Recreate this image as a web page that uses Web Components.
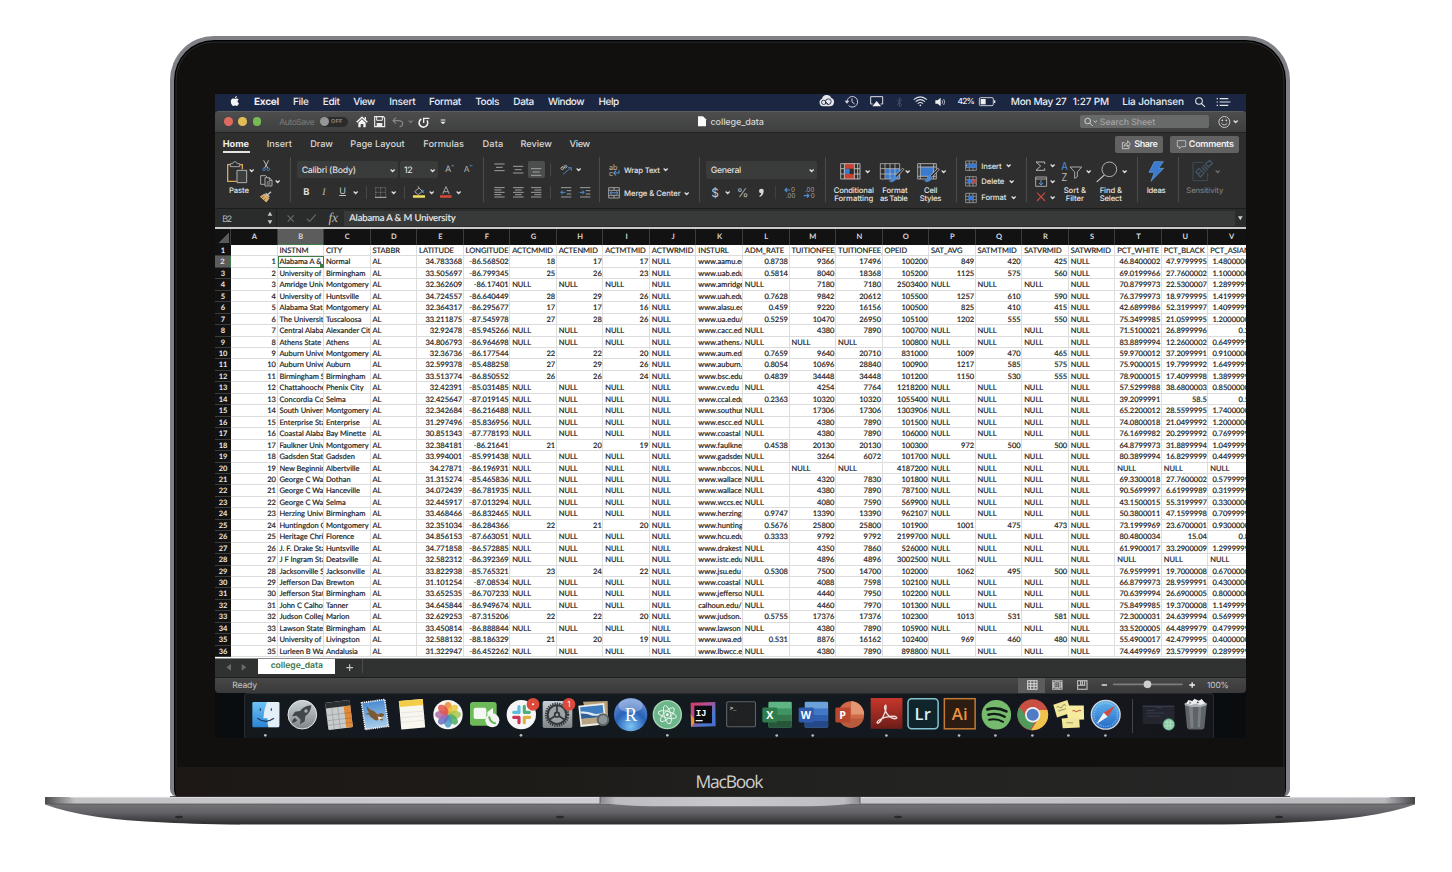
<!DOCTYPE html>
<html lang="en">
<head>
<meta charset="utf-8">
<title>college_data</title>
<style>
html,body{margin:0;padding:0;background:#fff;overflow:hidden}
body{width:1452px;height:872px}
</style>
</head>
<body>
<mac-book>
  <menu-bar></menu-bar>
  <excel-window></excel-window>
  <app-dock></app-dock>
</mac-book>
<script>
/* Drawing regions: origin in page pixels and the number of drawing units per pixel. */
const A={x:210,y:88,s:3}, B={x:550,y:88,s:3}, D={x:900,y:88,s:3}, P={x:210,y:655,s:3}, Q={x:725,y:655,s:2.987};
const r2=n=>Math.round(n*100)/100;
const item=(o,x0,y0,x1,y1,html,css='')=>({x:o.x+x0/o.s,y:o.y+y0/o.s,w:(x1-x0)/o.s,h:(y1-y0)/o.s,html,css});
/* Icon drawn in region units */
const ic=(o,x0,y0,x1,y1,g,css)=>item(o,x0,y0,x1,y1,`<svg viewBox="${x0} ${y0} ${x1-x0} ${y1-y0}" width="100%" height="100%" fill="none" stroke="#b4b4b4" stroke-width="2.6">${g}</svg>`,css);
/* Text label fitted to its width */
const tx=(o,x0,x1,yc,t,size=9,css='')=>item(o,x0,yc-16.5,x1,yc+19.5,`<fit-text w="${r2((x1-x0)/o.s)}" style="font-size:${size}px;${css}">${t}</fit-text>`);
const ch=(o,xc,yc,c='#dcdcdc')=>ic(o,xc-8,yc-8,xc+8,yc+8,`<path stroke="${c}" stroke-width="3.8" d="M${xc-6} ${yc-3.5}l6 6 6-6"/>`);
const vl=(o,x,y0,y1,c='#464746')=>item(o,x-1.5,y0,x+1.5,y1,'',`background:${c}`);
/* Flex row: every item is spaced from the previous one */
const row=(x0,y0,h,items)=>{let c=x0;return `<div class="row" style="height:${r2(h)}px">`+items.map(i=>{const m=i.x-c;c=i.x+i.w;return `<div class="it" style="margin:${r2(i.y-y0)}px 0 0 ${r2(m)}px;width:${r2(i.w)}px;height:${r2(i.h)}px;${i.css||''}">${i.html}</div>`}).join('')+'</div>'};
const box=(o,x0,y0,x1,y1,css,items)=>item(o,x0,y0,x1,y1,row(o.x+x0/o.s,o.y+y0/o.s,(y1-y0)/o.s,items),css);
const BASE=`<style>:host{display:block;box-sizing:border-box;font-family:Inter,"Liberation Sans",sans-serif;color:#dedede}
.row{display:flex;align-items:flex-start;flex:none}.it{flex:none;box-sizing:border-box}svg{display:block;overflow:visible}svg text{stroke:none}</style>`;

class FitText extends HTMLElement{
  connectedCallback(){
    const s=this.shadowRoot||this.attachShadow({mode:'open'});
    s.innerHTML='<style>:host{display:block;line-height:12px;height:12px;white-space:pre;text-rendering:geometricPrecision}span{display:inline-block}</style><span><slot></slot></span>';
    const sp=s.querySelector('span'),w=+this.getAttribute('w'),n=this.textContent.length;
    const nat=sp.getBoundingClientRect().width;
    if(nat&&n>1)sp.style.letterSpacing=((w-nat)/(n-1)).toFixed(3)+'px';
  }
}
customElements.define('fit-text',FitText);

class MenuBar extends HTMLElement{
  connectedCallback(){
    const s=this.attachShadow({mode:'open'});
    const m=(o,a,b,t,c='')=>tx(o,a,b,41,t,10,'font-weight:500;color:#eceef2;'+c);
    s.innerHTML=BASE+`<style>:host{height:17px;background:#1b2642}</style>`+row(215,94,17,[
      item(A,60,25,88,55,'<svg viewBox="1 0 21 24" width="100%" height="100%" fill="#f3f3f3"><path d="M12.152 6.896c-.948 0-2.415-1.078-3.96-1.04-2.04.027-3.91 1.183-4.961 3.014-2.117 3.675-.546 9.103 1.519 12.09 1.013 1.454 2.208 3.09 3.792 3.039 1.52-.065 2.09-.987 3.935-.987 1.831 0 2.35.987 3.96.948 1.637-.026 2.676-1.48 3.676-2.948 1.156-1.688 1.636-3.325 1.662-3.415-.039-.013-3.182-1.221-3.22-4.857-.026-3.04 2.48-4.494 2.597-4.559-1.429-2.09-3.623-2.324-4.39-2.376-2-.156-3.675 1.09-4.61 1.09zM15.53 3.83c.843-1.012 1.4-2.427 1.245-3.83-1.207.052-2.662.805-3.532 1.818-.78.896-1.454 2.338-1.273 3.714 1.338.104 2.715-.688 3.559-1.701"/></svg>'),
      m(A,132,208,'Excel','font-weight:700'),m(A,249,297,'File'),m(A,338,390,'Edit'),m(A,430,496,'View'),m(A,538,617,'Insert'),m(A,657,754,'Format'),m(A,796,868,'Tools'),m(A,910,973,'Data'),m(A,1014,1124,'Window'),m(B,146,208,'Help'),
      ic(B,806,25,850,58,'<path fill="#e8e8ec" stroke="none" d="M818 56a12 12 0 0 1-3-23 15 15 0 0 1 28-2 13 13 0 0 1-6 25z"/><g stroke="#1b2642" stroke-width="2.6"><circle cx="820" cy="44" r="6.5"/><circle cx="834" cy="42" r="8.5"/><path d="M824 41l10 9"/></g>'),
      ic(B,884,24,924,60,'<g stroke="#d5d8e0" stroke-width="2.8"><path d="M890 41a16 16 0 1 1 5 12M905 31v11l8 6"/><path fill="#d5d8e0" stroke="none" d="M883 38h14l-7 9z"/></g>'),
      ic(B,961,25,1001,58,'<path stroke="#dcdfe6" stroke-width="3" d="M969 49h-6V27h36v22h-6"/><path fill="#f0f0f4" stroke="none" d="M981 40l13 16h-26z"/>'),
      ic(B,1040,26,1056,58,'<path stroke="#4c566e" stroke-width="2.4" d="M1040 34l14 15-7 7V28l7 7-14 15"/>'),
      ic(D,40,25,84,57,'<g stroke="#dfe2e8" stroke-width="3.2"><path d="M42 36q20-17 40 0M48 42q14-12 28 0M54 48q8-7 16 0"/><circle cx="62" cy="53" r="2.6" fill="#dfe2e8" stroke="none"/></g>'),
      ic(D,104,26,134,56,'<path fill="#eee" stroke="none" d="M105 36h7l9-8v26l-9-8h-7z"/><path stroke="#cfd3db" stroke-width="2.4" d="M125 36q4 5 0 10M130 32q6 9 0 18"/>'),
      tx(D,173,225,41,'42%',8.4,'font-weight:500;color:#eceef2'),
      ic(D,237,27,287,55,'<rect x="238" y="29" width="42" height="24" rx="4" stroke="#e4e4e8"/><rect x="242" y="33" width="15" height="16" fill="#eee" stroke="none"/><path d="M284 37v8" stroke="#e4e4e8" stroke-width="4"/>'),
      m(D,333,501,'Mon May 27'),m(D,519,628,'1:27 PM'),m(D,667,853,'Lia Johansen'),
      ic(D,886,26,918,58,'<g stroke="#e4e4e8" stroke-width="3.2"><circle cx="898" cy="38" r="10"/><path d="M905 45l11 11"/></g>'),
      ic(D,948,26,992,56,'<path stroke="#e4e4e8" stroke-width="3.4" d="M950 31h4M950 41h4M950 51h4M959 31h26M959 41h32M959 51h26"/>')
    ]);
  }
}
customElements.define('menu-bar',MenuBar);

class TitleBar extends HTMLElement{
  connectedCallback(){
    const dot=(x,c)=>item(A,x-13,88,x+13,114,'',`background:${c};border-radius:50%`);
    this.attachShadow({mode:'open'}).innerHTML=BASE+`<style>:host{height:22px;background:linear-gradient(#4d4d4d,#3e3f3f);border-top:1px solid #5d5d5d;border-bottom:1px solid #222;border-radius:4px 4px 0 0}</style>`+row(215,112,20,[
      dot(55,'#df6a5e'),dot(98,'#e1bc57'),dot(141,'#79b955'),
      tx(A,208,314,102,'AutoSave',8.6,'color:#747474;font-weight:500'),
      box(A,330,87,413,116,'background:#2b2b2c;border-radius:5px',[item(A,330,88,357,115,'','background:#969696;border-radius:50%'),tx(A,363,397,101,'OFF',5.4,'color:#8f8f8f;font-weight:600')]),
      ic(A,437,85,472,119,'<path d="M439 104l16-15 16 15" stroke="#f4f4f4" stroke-width="4.4"/><path d="M444 105l11-10 11 10v14h-7v-10h-8v10h-7z" fill="#f4f4f4" stroke="none"/><path d="M465 88v8" stroke="#f4f4f4" stroke-width="4"/>'),
      ic(A,492,85,526,119,'<path d="M494 87h26l4 4v26h-30z" stroke="#ededed" stroke-width="3.4"/><path d="M500 87v11h17V87" stroke="#ededed" stroke-width="3"/><path d="M500 117v-11h17v11z" fill="#ededed" stroke="none"/>'),
      ic(A,547,86,582,118,'<path d="M559 88l-9 9 9 9M551 97h18q10 1 10 10 0 7-9 8" stroke="#888" stroke-width="3.4"/>'),
      ch(A,601,102,'#777'),
      ic(A,625,86,661,120,'<path d="M635 92a13 13 0 1 0 17 4" stroke="#f2f2f2" stroke-width="4.6"/><path d="M642 104V90h17" stroke="#f2f2f2" stroke-width="4"/>'),
      ic(A,689,94,707,112,'<path d="M691 97h14" stroke="#eee" stroke-width="3"/><path d="M690 102h16l-8 8z" fill="#eee" stroke="none"/>'),
      ic(B,444,85,469,117,'<path d="M444 86h15l9 9v21h-24z" fill="#fafafa" stroke="none"/>'),
      tx(B,482,642,103,'college_data',9,'color:#d6d6d6;font-weight:500'),
      box(D,540,82,926,121,'background:#686969;border-radius:2px',[
        ic(D,552,87,592,116,'<g stroke="#d0d0d0" stroke-width="3"><circle cx="563" cy="99" r="8.5"/><path d="M569 105l9 9M581 98l5 5 5-5"/></g>'),
        tx(D,600,766,103,'Search Sheet',8.8,'color:#a5a5a5;font-weight:500')]),
      ic(D,953,83,991,120,'<g stroke="#cfcfcf" stroke-width="2.8"><circle cx="972" cy="101" r="16.5"/><path d="M963 105q9 10 18 0"/></g><circle cx="966" cy="96" r="2.6" fill="#ddd" stroke="none"/><circle cx="978" cy="96" r="2.6" fill="#ddd" stroke="none"/>'),
      ch(D,1008,102)
    ]);
  }
}
customElements.define('title-bar',TitleBar);

class RibbonTabs extends HTMLElement{
  connectedCallback(){
    const t=(o,a,b,s)=>tx(o,a,b,170,s,9.2,'font-weight:500;color:#d8d8d8');
    this.attachShadow({mode:'open'}).innerHTML=BASE+`<style>:host{height:24px;background:#2d2e2d}</style>`+row(215,133,24,[
      box(A,38,150,119,195,'border-bottom:2px solid #e4e4e4',[tx(A,38,117,170,'Home',9.2,'font-weight:700;color:#f0f0f0')]),
      t(A,170,246,'Insert'),t(A,301,369,'Draw'),t(A,421,584,'Page Layout'),t(A,640,762,'Formulas'),t(A,818,880,'Data'),t(A,932,1026,'Review'),t(B,59,121,'View'),
      box(D,646,144,789,195,'background:#626262;border-radius:2px',[
        ic(D,665,156,691,184,'<g stroke="#cfcfcf" stroke-width="2.6"><path d="M673 164h-7v18h20v-9"/><path d="M671 175q2-9 11-10v-7l8 10-8 9v-6q-7 0-11 4z"/></g>'),
        tx(D,703,774,170,'Share',9,'font-weight:600;color:#f0f0f0')]),
      box(D,810,144,1017,195,'background:#626262;border-radius:2px',[
        ic(D,830,156,858,184,'<path stroke="#c4c4c4" d="M831 158h25v18h-13l-6 6v-6h-6z"/>'),
        tx(D,867,1002,170,'Comments',9,'font-weight:600;color:#f0f0f0')])
    ]);
  }
}
customElements.define('ribbon-tabs',RibbonTabs);

const hl=(l,c='#b0b0b0',w=2.6)=>`<path stroke="${c}" stroke-width="${w}" d="${l.map(([a,y,b])=>`M${a} ${y}H${b}`).join('')}"/>`;
class RibbonTools extends HTMLElement{
  connectedCallback(){
    const col=(x0,x1,rows,line)=>`<div class="col${line?' line':''}" style="width:${r2(x1-x0)}px">`+rows.map(([y0,y1,it])=>row(x0,y0,y1-y0,it)).join('')+'</div>';
    const two=(a,b)=>[[157,183,a],[183,202,b]];
    const lb=(o,a,b,y,s,c='#e6e6e6')=>tx(o,a,b,y,s,7.7,'font-weight:500;color:'+c);
    const big=(icon,labels)=>[[157,186.5,icon],...labels.map((l,k)=>[186.5+8*k,194.5+8*k,[l]])];
    const blue='#3a7bd0';
    const tbl=(o,x,y)=>`<path stroke="#b9b9b9" stroke-width="2.4" d="M${x} ${y}h58v46h-58zM${x} ${y+15}h58M${x} ${y+31}h58M${x+14} ${y}v46M${x+29} ${y}v46M${x+44} ${y}v46"/>`;
    const brush=(x,y)=>`<path d="M${x} ${y}l-24 24-4 8 9-3 24-26z" fill="#2d2e2d" stroke="#b8b8b8" stroke-width="2.4"/><path d="M${x-22} ${y+21}q-11 2-12 14-5 3-9 1 8 9 18 3 7-4 8-12z" fill="#4b8ad6" stroke="none"/>`;
    const cells=(y,g)=>`<path stroke="#a9a9a9" stroke-width="2.2" d="M197 ${y-14}h32v28h-32zM197 ${y-5}h32M197 ${y+5}h32M208 ${y-14}v28M219 ${y-14}v28"/>${g}`;
    this.attachShadow({mode:'open'}).innerHTML=BASE+`<style>:host{height:51px;background:#2d2e2d;display:flex}.col{flex:none;height:45px}.line{background:linear-gradient(#4a4b4a,#4a4b4a) left/1px 100% no-repeat}</style>`+
    col(215,255,[[157,185,[
      ic(A,50,218,112,286,'<path d="M59 229H52v50h27M88 229h8v14" stroke="#e0a35a" stroke-width="4"/><path d="M60 235v-9h7q1-6 7-6t7 6h7v9z" stroke="#b5b5b5" fill="#2d2e2d"/><path d="M80 246h29v37H80z" stroke="#c4c4c4" fill="#3c3d3d"/>'),ch(A,126,249)]],
      [185,202,[lb(A,57,117,307,'Paste')]]])+
    col(255,289.5,[[157,173,[ic(A,155,217,181,251,'<path d="M160 218l12 23M175 218l-12 23" stroke="#c6c6c6" stroke-width="2.8"/><g stroke="#4c8cd6"><circle cx="161" cy="245" r="4"/><circle cx="174" cy="245" r="4"/></g>')]],
      [173,189,[ic(A,149,262,187,297,'<path stroke="#bdbdbd" d="M163 290h-12v-26h15l5 5M164 270h13l8 8v17h-21zM177 270v8h8M169 283h11M169 289h11"/>'),ch(A,203,281)]],
      [189,202,[ic(A,151,308,189,342,'<path d="M184 310l-14 13M168 315l11 11" stroke="#c9c9c9" stroke-width="4"/><path d="M152 325l13-8 13 13-8 11z" fill="#e0ab62" stroke="#e8c58c" stroke-width="2"/><path d="M157 328l5-3M164 334l4-4" stroke="#6b4d22"/>')]]])+
    col(289.5,483,two([
      box(A,261,220,563,271,'background:#3a3b3b;border-radius:2px',[tx(A,275,438,247,'Calibri (Body)',8.8,'font-weight:500'),ch(A,547,247)]),
      box(A,569,220,684,271,'background:#3a3b3b;border-radius:2px',[tx(A,582,608,247,'12',8.8,'font-weight:500'),ch(A,669,247)]),
      tx(A,705,721,245,'A',9,'color:#b4b4b4'),ic(A,722,229,734,241,'<path stroke="#4f8fd8" stroke-width="3" d="M723 236l4-4 4 4"/>'),
      tx(A,761,776,245,'A',8.4,'color:#b4b4b4'),ic(A,777,229,789,241,'<path stroke="#4f8fd8" stroke-width="3" d="M779 232l4 4 4-4"/>')
    ],[
      tx(A,280,296,313,'B',9.4,'font-weight:700'),tx(A,337,350,313,'I',10,'font-style:italic;font-family:Liberation Serif,serif;color:#bbb'),
      tx(A,388,407,311,'<u>U</u>',9,'color:#c8c8c8'),ch(A,437,315),vl(A,469,295,332),
      ic(A,496,297,530,330,'<path stroke="#8a8a8a" stroke-dasharray="3 3" d="M498 299h30M498 313h30M498 299v28M513 299v28M528 299v28"/><path d="M496 328h34" stroke="#b8b8b8" stroke-width="3"/>'),ch(A,551,315),vl(A,583,295,332),
      ic(A,609,295,646,331,'<path d="M614 312l13-11 10 10-12 10zM627 301l-3-5" stroke="#bdbdbd"/><path d="M638 305q6 7 3 12-5 0-5-6z" fill="#4f8fd8" stroke="none"/><path d="M609 323h36v7h-36z" fill="#efe35c" stroke="none"/>'),ch(A,665,315),
      ic(A,691,295,727,331,'<path d="M699 319l10-22 10 22M702 312h14" stroke="#b5b5b5"/><path d="M691 323h35v7h-35z" fill="#d8493a" stroke="none"/>'),ch(A,747,315)
    ]),1)+
    col(483,599,two([
      ic(A,851,226,884,252,hl([[852,229,883],[857,239,877],[852,249,883]])),ic(A,908,230,941,258,hl([[908,234,939],[913,244,934],[908,254,939]])),
      box(A,954,220,1004,271,'background:#4c4d4d;border-radius:2px',[ic(A,964,238,995,266,hl([[964,243,995],[969,253,990],[964,263,995]]))]),vl(A,1023,226,264),
      ic(B,29,227,67,262,'<path d="M32 240l8-8M36 244l10-10" stroke="#b0b0b0"/><circle cx="36" cy="240" r="4"/><circle cx="46" cy="235" r="4"/><path d="M38 258l24-20M53 238h10v10" stroke="#4f8fd8"/>'),ch(B,86,246)
    ],[
      ic(A,851,298,884,331,hl([[852,300,883],[852,307,873],[852,314,883],[852,321,873],[852,328,883]])),
      ic(A,908,298,941,331,hl([[908,300,940],[914,307,934],[908,314,940],[914,321,934],[908,328,940]])),
      ic(A,964,298,996,331,hl([[964,300,995],[974,307,995],[964,314,995],[974,321,995],[964,328,995]])),vl(A,1023,295,332),
      ic(B,30,298,65,331,hl([[33,300,64],[50,309,64],[50,319,64],[33,328,64]])+'<path stroke="#4f8fd8" stroke-width="3" d="M46 314H33M38 309l-6 5 6 5"/>'),
      ic(B,86,298,121,331,hl([[89,300,120],[106,309,120],[106,319,120],[89,328,120]])+'<path stroke="#4f8fd8" stroke-width="3" d="M88 314h13M96 309l6 5-6 5"/>')
    ]),1)+
    col(599,698.5,two([
      ic(B,177,227,211,265,'<text x="177" y="245" font-size="22" fill="#b8b8b8" font-family="Inter">ab</text><text x="177" y="262" font-size="22" fill="#b8b8b8" font-family="Inter">c</text><path stroke="#4f8fd8" stroke-width="3.4" d="M207 246v8h-15M198 247l-7 7 7 7"/>'),
      lb(B,222,330,246,'Wrap Text'),ch(B,348,246)
    ],[
      ic(B,173,297,209,332,'<path stroke="#b0b0b0" d="M175 299h32v31h-32zM175 307h32M175 322h32M191 299v8M191 322v8"/><path stroke="#5b98dc" stroke-width="3" d="M179 314.500h24M184 310l-5 4.500 5 4.500M198 310l5 4.500-5 4.500"/>'),
      lb(B,222,392,315,'Merge &amp; Center'),ch(B,410,316)
    ]),1)+
    col(698.5,824.5,two([
      box(B,468,220,802,273,'background:#3a3b3b;border-radius:2px',[tx(B,482,574,247,'General',8.8,'font-weight:500'),ch(B,785,247)])
    ],[
      tx(B,484,503,313,'$',12,'color:#c4c4c4'),ch(B,533,315),tx(B,560,592,313,'%',12,'color:#b8b8b8'),
      ic(B,623,300,643,330,'<path d="M633 302a7 7 0 0 1 7 8q0 12-12 17l-1-3q6-4 6-8a7 7 0 1 1 0-14z" fill="#d8d8d8" stroke="none"/>'),vl(B,676,295,332,'#3f403f'),
      ic(B,702,297,739,332,'<text x="723" y="313" font-size="19" fill="#aaa" font-family="Inter" textLength="12" lengthAdjust="spacingAndGlyphs">0</text><text x="708" y="330" font-size="19" fill="#aaa" font-family="Inter" textLength="28" lengthAdjust="spacingAndGlyphs">.00</text><path stroke="#4f8fd8" stroke-width="3.4" d="M720 306h-14M711 300l-6 6 6 6"/>'),
      ic(B,758,297,795,332,'<text x="764" y="313" font-size="19" fill="#aaa" font-family="Inter" textLength="28" lengthAdjust="spacingAndGlyphs">.00</text><text x="781" y="330" font-size="19" fill="#aaa" font-family="Inter" textLength="12" lengthAdjust="spacingAndGlyphs">0</text><path stroke="#4f8fd8" stroke-width="3.4" d="M760 323h15M770 317l6 6-6 6"/>')
    ]),1)+
    col(824.5,877,big([
      ic(B,869,224,933,275,'<path fill="#c8402f" stroke="none" d="M882 226h30v15h-30zM882 257h30v15h-30z"/><path fill="#3a7bd0" stroke="none" d="M882 241h16v16h-16z"/>'+'<path stroke="#c4c4c4" stroke-width="2.6" d="M871 226h58v46h-58zM871 241h11M912 241h17M871 257h11M912 257h17M882 226v46M912 226v46M922 226v46"/>'),ch(B,952,250)],
      [lb(B,851,972,307,'Conditional'),lb(B,853,970,332,'Formatting')]),1)+
    col(877,915,big([
      ic(B,991,224,1060,285,`<path fill="${blue}" stroke="none" d="M1007 241h43v31h-43z"/>`+tbl(B,992,226)+brush(1058,240)),ch(B,1074,250)],
      [lb(B,997,1073,307,'Format'),lb(B,990,1073,332,'as Table')]))+
    col(915,955.5,big([
      ic(D,50,224,116,286,`<path fill="${blue}" stroke="none" d="M60 236h40v28H60z"/><path stroke="#b9b9b9" d="M52 226h56v46H52zM52 236h56M52 264h56M60 226v46M100 226v46"/>`+brush(112,240)),ch(D,132,250)],
      [lb(D,72,112,307,'Cell'),lb(D,59,124,332,'Styles')]))+
    col(955.5,1025.5,[
      [157,173.5,[ic(D,195,216,232,250,cells(233,'<path fill="#3a7bd0" stroke="none" d="M205 227h25v12h-25z"/><path stroke="#7db4ee" d="M203 233h-6M202 229l-4 4 4 4"/>')),lb(D,244,305,234,'Insert'),ch(D,327,233)]],
      [173.5,189.5,[ic(D,195,264,232,297,cells(280,'<path fill="#3a7bd0" stroke="none" d="M202 274h16v12h-16z"/><path stroke="#d8493a" stroke-width="4" d="M217 274l12 12M229 274l-12 12"/>')),lb(D,244,313,281,'Delete'),ch(D,334,280)]],
      [189.5,202,[ic(D,195,311,232,345,cells(329,'<path fill="#3a7bd0" stroke="none" d="M205 322h17v14h-17z"/>')),lb(D,244,319,328,'Format'),ch(D,341,328)]]],1)+
    col(1025.5,1058,[
      [157,173.5,[ic(D,406,218,439,250,'<path stroke="#b9b9b9" stroke-width="3" d="M435 227v-6h-26l14 12-14 13h26v-6"/>'),ch(D,458,234)]],
      [173.5,189.5,[ic(D,404,263,441,297,'<path stroke="#b9b9b9" d="M406 266h33v28h-33zM406 272h33"/><path stroke="#5b98dc" stroke-width="3" d="M422 275v14M416 284l6 6 6-6"/>'),ch(D,458,281)]],
      [189.5,202,[ic(D,408,313,438,342,'<path stroke="#c9493f" stroke-width="3.400" d="M411 315l24 25M435 315l-24 25"/>'),ch(D,458,328)]]],1)+
    col(1058,1094,big([
      ic(D,484,218,548,284,'<text x="485" y="246" font-size="29" fill="#4f8fd8" font-family="Inter">A</text><text x="485" y="277" font-size="29" fill="#bbb" font-family="Inter">Z</text><path stroke="#b9b9b9" d="M511 236h35l-13 15v14l-8 5v-19z"/>'),ch(D,566,250)],
      [lb(D,491,558,307,'Sort &amp;'),lb(D,497,552,332,'Filter')]))+
    col(1094,1136.5,big([
      ic(D,589,218,654,284,'<circle cx="629" cy="243" r="22" stroke="#b9b9b9" stroke-width="2.800"/><path stroke="#b9b9b9" stroke-width="3.400" d="M614 260l-23 21"/>'),ch(D,673,250)],
      [lb(D,599,666,307,'Find &amp;'),lb(D,599,666,332,'Select')]))+
    col(1136.5,1177.5,big([ic(D,745,218,795,284,'<path d="M764 220h27l-14 20h15l-38 39 10-27h-16z" fill="#3a7bd0" stroke="#6ba5e6" stroke-width="2"/>')],[lb(D,740,797,307,'Ideas')]),1)+
    col(1177.5,1246,big([ic(D,875,215,938,284,'<path stroke="#3f5468" d="M909 222h-31v55h44v-24"/><g stroke="#41566b" stroke-width="4"><path d="M915 226l13-10 8 9-12 11zM909 231l14 14M904 236l13 14M886 250l10-10 15 14-11 12zM893 258l8-8"/></g>'),ch(D,952,250,'#6a6a6a')],
      [lb(D,859,970,307,'Sensitivity','#7d7e7d')]),1);
  }
}
customElements.define('ribbon-tools',RibbonTools);

class FormulaBar extends HTMLElement{
  connectedCallback(){
    this.attachShadow({mode:'open'}).innerHTML=BASE+`<style>:host{height:19px;background:#2a2b2b;border-top:1px solid #1b1c1c}</style>`+row(215,209,18,[
      tx(A,37,66,393,'B2',8.8,'color:#b8b8b8'),
      ic(A,170,369,188,411,'<path fill="#c8c8c8" stroke="none" d="M172 383h14l-7-12zM172 397h14l-7 12z"/>'),
      vl(A,201,366,417,'#1f2020'),
      ic(A,230,380,252,402,'<path stroke="#6a6a6a" stroke-width="3.400" d="M232 381l18 19M250 381l-18 19"/>'),
      ic(A,288,378,319,402,'<path stroke="#6a6a6a" stroke-width="3.400" d="M290 392l9 8 18-20"/>'),
      tx(A,356,384,389,'fx',13.5,'font-family:Liberation Serif,serif;font-style:italic;color:#bdbdbd'),
      box(A,402,370,3075,414,'background:#383a39',[tx(A,418,737,391,'Alabama A &amp; M University',9.5,'font-family:Lato,Inter,sans-serif;color:#ececec;-webkit-text-stroke:.15px #ececec')]),
      ic(D,1015,383,1030,397,'<path fill="#d0d0d0" stroke="none" d="M1015 384h14l-7 12z"/>')
    ]);
  }
}
customElements.define('formula-bar',FormulaBar);

const HEAD='|INSTNM|CITY|STABBR|LATITUDE|LONGITUDE|ACTCMMID|ACTENMID|ACTMTMID|ACTWRMID|INSTURL|ADM_RATE|TUITIONFEE_|TUITIONFEE_|OPEID|SAT_AVG|SATMTMID|SATVRMID|SATWRMID|PCT_WHITE|PCT_BLACK|PCT_ASIAN';
/* name|city|lat|long|actcm|acten|actmt|url|adm|fee in|fee out|opeid|sat|satmt|satvr|white|black|asian ; N stands for NULL */
const DATA=`Alabama A & M|Normal|34.783368|-86.568502|18|17|17|www.aamu.edu|0.8738|9366|17496|100200|849|420|425|46.8400002|47.9799995|1.48000002
University of Ala|Birmingham|33.505697|-86.799345|25|26|23|www.uab.edu|0.5814|8040|18368|105200|1125|575|560|69.0199966|27.7600002|1.10000002
Amridge Univ|Montgomery|32.362609|-86.17401|N|N|N|www.amridge|N|7180|7180|2503400|N|N|N|70.8799973|22.5300007|1.28999996
University of Ala|Huntsville|34.724557|-86.640449|28|29|26|www.uah.edu|0.7628|9842|20612|105500|1257|610|590|76.3799973|18.9799995|1.41999996
Alabama State|Montgomery|32.364317|-86.295677|17|17|16|www.alasu.edu|0.459|9220|16156|100500|825|410|415|42.6899986|52.3199997|1.40999997
The University|Tuscaloosa|33.211875|-87.545978|27|28|26|www.ua.edu/|0.5259|10470|26950|105100|1202|555|550|75.3499985|21.0599995|1.20000005
Central Alabama|Alexander City|32.92478|-85.945266|N|N|N|www.cacc.edu|N|4380|7890|100700|N|N|N|71.5100021|26.8999996|0.28
Athens State U|Athens|34.806793|-86.964698|N|N|N|www.athens.edu|N|N|N|100800|N|N|N|83.8899994|12.2600002|0.64999998
Auburn University|Montgomery|32.36736|-86.177544|22|22|20|www.aum.edu|0.7659|9640|20710|831000|1009|470|465|59.9700012|37.2099991|0.91000003
Auburn University|Auburn|32.599378|-85.488258|27|29|26|www.auburn.edu|0.8054|10696|28840|100900|1217|585|575|75.9000015|19.7999992|1.64999998
Birmingham S|Birmingham|33.513774|-86.850552|26|26|24|www.bsc.edu|0.4839|34448|34448|101200|1150|530|555|78.9000015|17.4099998|1.38999999
Chattahoochee|Phenix City|32.42391|-85.031485|N|N|N|www.cv.edu|N|4254|7764|1218200|N|N|N|57.5299988|38.6800003|0.85000002
Concordia College|Selma|32.425647|-87.019145|N|N|N|www.ccal.edu|0.2363|10320|10320|1055400|N|N|N|39.2099991|58.5|0.54
South University|Montgomery|32.342684|-86.216488|N|N|N|www.southuniv|N|17306|17306|1303906|N|N|N|65.2200012|28.5599995|1.74000001
Enterprise State|Enterprise|31.297496|-85.836956|N|N|N|www.escc.edu|N|4380|7890|101500|N|N|N|74.0800018|21.0499992|1.20000005
Coastal Alabama|Bay Minette|30.851343|-87.778193|N|N|N|www.coastal|N|4380|7890|106000|N|N|N|76.1699982|20.2999992|0.76999998
Faulkner Univ|Montgomery|32.384181|-86.21641|21|20|19|www.faulkner|0.4538|20130|20130|100300|972|500|500|64.8799973|31.8899994|1.04999995
Gadsden State|Gadsden|33.994001|-85.991438|N|N|N|www.gadsden|N|3264|6072|101700|N|N|N|80.3899994|16.8299999|0.44999999
New Beginning|Albertville|34.27871|-86.196931|N|N|N|www.nbccos.|N|N|N|4187200|N|N|N|N|N|N
George C Wallace|Dothan|31.315274|-85.465836|N|N|N|www.wallace|N|4320|7830|101800|N|N|N|69.3300018|27.7600002|0.57999998
George C Wallace|Hanceville|34.072439|-86.781935|N|N|N|www.wallace|N|4380|7890|787100|N|N|N|90.5699997|6.61999989|0.31999999
George C Wallace|Selma|32.445917|-87.013294|N|N|N|www.wccs.edu|N|4080|7590|569900|N|N|N|43.1500015|55.3199997|0.33000001
Herzing University|Birmingham|33.468466|-86.832465|N|N|N|www.herzing|0.9747|13390|13390|962107|N|N|N|50.3800011|47.1599998|0.70999998
Huntingdon College|Montgomery|32.351034|-86.284366|22|21|20|www.hunting|0.5676|25800|25800|101900|1001|475|473|73.1999969|23.6700001|0.93000001
Heritage Christ|Florence|34.856153|-87.663051|N|N|N|www.hcu.edu|0.3333|9792|9792|2199700|N|N|N|80.4800034|15.04|0.83
J. F. Drake State|Huntsville|34.771858|-86.572885|N|N|N|www.drakest|N|4350|7860|526000|N|N|N|61.9900017|33.2900009|1.29999995
J F Ingram State|Deatsville|32.582312|-86.392369|N|N|N|www.istc.edu|N|4896|4896|3002500|N|N|N|N|N|N
Jacksonville State|Jacksonville|33.822938|-85.765321|23|24|22|www.jsu.edu|0.5308|7500|14700|102000|1062|495|500|76.9599991|19.7000008|0.67000002
Jefferson Davis|Brewton|31.101254|-87.08534|N|N|N|www.coastal|N|4088|7598|102100|N|N|N|66.8799973|28.9599991|0.43000001
Jefferson State|Birmingham|33.652535|-86.707233|N|N|N|www.jefferson|N|4440|7950|102200|N|N|N|70.6399994|26.6900005|0.80000001
John C Calhoun|Tanner|34.645844|-86.949674|N|N|N|calhoun.edu/|N|4460|7970|101300|N|N|N|75.8499985|19.3700008|1.14999998
Judson College|Marion|32.629253|-87.315206|22|22|20|www.judson.|0.5755|17376|17376|102300|1013|531|581|72.3000031|24.6399994|0.56999999
Lawson State|Birmingham|33.450814|-86.888844|N|N|N|www.lawson|N|4380|7890|105900|N|N|N|33.5200005|64.4899979|0.47999999
University of West|Livingston|32.588132|-88.186329|21|20|19|www.uwa.edu|0.531|8876|16162|102400|969|460|480|55.4900017|42.4799995|0.40000001
Lurleen B Wallace|Andalusia|31.322947|-86.452262|N|N|N|www.lbwcc.edu|N|4380|7890|898800|N|N|N|74.4499969|23.5799999|0.28999999`;

class SheetGrid extends HTMLElement{
  connectedCallback(){
    const rows=DATA.split('\n').map((l,k)=>{const f=l.split('|');return [k+1,f[0],f[1],'AL',...f.slice(2,7),'N',...f.slice(7,15),'N',...f.slice(15)]});
    const esc=t=>String(t).replace(/&/g,'&amp;');
    let h='<div class="h corner"></div>';
    for(let c=0;c<22;c++)h+=`<div class="h${c==1?' sel':''}">${String.fromCharCode(65+c)}</div>`;
    [HEAD.split('|'),...rows].forEach((r,k)=>{
      h+=`<div class="n${k==1?' sel':''}">${k+1}</div>`;
      r.forEach((v,c)=>{const num=k&&/^-?[\d.]+$/.test(v);h+=`<div class="c${num?' r':''}${k==1&&c==1?' act':''}">${v==='N'?'NULL':esc(v)}</div>`});
    });
    this.attachShadow({mode:'open'}).innerHTML=`<style>
:host{display:grid;box-sizing:border-box;grid-template-columns:16px 46.5px repeat(21,46.56px);grid-template-rows:15.9px repeat(36,11.467px);width:1031px;overflow:hidden;background:#fff;font:7.5px/12px Lato,Inter,sans-serif;color:#161616;text-rendering:geometricPrecision;border-top:2px solid #c9c9c9;-webkit-text-stroke:.18px #222}
div{box-sizing:border-box;overflow:hidden;white-space:nowrap;min-width:0;min-height:0}
.h{background:#121212;color:#d8d8d8;text-align:center;font-weight:700;line-height:16.500px;border-right:1px solid #3c3c3c;padding-left:1px;-webkit-text-stroke:0}
.h.sel{background:#5b5c5b;border-bottom:1px solid #3f7d46}
.corner{background:linear-gradient(135deg,transparent 52%,#5a5a5a 52%) 3px 3px/11px 11px no-repeat #121212}
.n{background:#121212;color:#e6e6e6;font-weight:700;text-align:center;border-bottom:1px solid #3c3c3c;-webkit-text-stroke:0}
.n.sel{background:#5b5c5b;border-right:1px solid #3f7d46}
.c{border-right:1px solid #dedede;border-bottom:1px solid #dcdcdc;padding:0 .6px 0 1.900px;line-height:12.200px}
.r{text-align:right;padding-left:0}
.act{outline:1px solid #3f7d46;outline-offset:-1px;border-color:#3f7d46;z-index:1;background:linear-gradient(#3f7d46,#3f7d46) right bottom/3px 3px no-repeat}
</style>`+h;
  }
}
customElements.define('sheet-grid',SheetGrid);

class SheetTabs extends HTMLElement{
  connectedCallback(){
    this.attachShadow({mode:'open'}).innerHTML=BASE+`<style>:host{height:19px;background:#303131;border-top:1px solid #8a8a8a}</style>`+row(215,659,18,[
      ic(P,47,28,63,48,'<path fill="#6a6a6a" stroke="none" d="M62 28v20l-14-10z"/>'),ic(P,94,28,111,48,'<path fill="#6a6a6a" stroke="none" d="M96 28v20l14-10z"/>'),
      box(P,145,11,375,56,'background:#fff',[tx(P,182,339,31,'college_data',8.6,'font-weight:600;color:#39794a')]),
      ic(P,407,26,430,48,'<path stroke="#c8c8c8" stroke-width="3.400" d="M408 37h20M418 27v20"/>'),vl(P,458,12,54,'#4c4c4c')
    ]);
  }
}
customElements.define('sheet-tabs',SheetTabs);

class StatusBar extends HTMLElement{
  connectedCallback(){
    this.attachShadow({mode:'open'}).innerHTML=BASE+`<style>:host{height:16px;background:linear-gradient(#474747,#3a3a3a);border-top:1px solid #1f1f1f;border-radius:0 0 4px 4px}</style>`+row(215,678,14.5,[
      tx(P,67,141,90,'Ready',8.6,'color:#c4c4c4'),
      box(Q,876,68,955,112,'background:#5c5c5c',[ic(Q,901,74,933,104,'<path stroke="#e0e0e0" stroke-width="3" d="M903 76h28v26h-28zM903 85h28M903 93h28M912 76v26M922 76v26"/>')]),
      ic(Q,977,74,1009,104,'<path stroke="#bdbdbd" stroke-width="3" d="M979 76h28v26h-28zM986 80h14v18h-14zM982 80v18M1004 80v18M990 85h6M990 90h6M990 95h6"/>'),
      ic(Q,1053,74,1085,104,'<path stroke="#cfcfcf" stroke-width="3" d="M1055 76h28v26h-28zM1055 90h14V76M1064 76v14M1076 76v14h-7"/>'),
      ic(Q,1123,80,1143,98,'<path stroke="#eee" stroke-width="4" d="M1125 89h16"/>'),
      ic(Q,1160,76,1368,102,'<path stroke="#7d7d7d" stroke-width="5.500" stroke-linecap="round" d="M1162 89h204"/><circle cx="1263" cy="89" r="11.500" fill="#cfcfcf" stroke="none"/>'),
      ic(Q,1385,80,1405,98,'<path stroke="#eee" stroke-width="4" d="M1386 89h17M1394.500 80.500v17"/>'),
      tx(Q,1440,1505,90,'100%',8.4,'color:#c8c8c8')
    ]);
  }
}
customElements.define('status-bar',StatusBar);

class ExcelWindow extends HTMLElement{
  connectedCallback(){
    this.attachShadow({mode:'open'}).innerHTML=`<style>:host{display:flex;flex-direction:column;height:582px;background:linear-gradient(#1b2642 50%,#0a0d10 50%)}sheet-grid{height:431px;flex:none}title-bar,ribbon-tabs,ribbon-tools,formula-bar,sheet-tabs,status-bar{flex:none}</style>
<title-bar></title-bar><ribbon-tabs></ribbon-tabs><ribbon-tools></ribbon-tools><formula-bar></formula-bar><sheet-grid></sheet-grid><sheet-tabs></sheet-tabs><status-bar></status-bar>`;
  }
}
customElements.define('excel-window',ExcelWindow);

class AppDock extends HTMLElement{
  connectedCallback(){
    const N='stroke="none"';
    const d=(o,a,b,g,run)=>ic(o,a,120,b,250,g+(run?`<circle cx="${run}" cy="241" r="4" fill="#b9bdc0" ${N}/>`:''));
    const petals=['#f08a35','#e9c93f','#a8c850','#4fae62','#4a9ac4','#6a6fc0','#b068a8','#e0564c'].map((c,k)=>`<ellipse cx="713" cy="159" rx="12" ry="19" fill="${c}" opacity=".85" transform="rotate(${k*45} 713 179)"/>`).join('');
    const office=(x,c1,c2,c3,c4,cb,l)=>`<g ${N}><rect x="${x+18}" y="140" width="70" height="77" rx="4" fill="${c1}"/><path fill="${c2}" d="M${x+18} 160h70v19h-70z"/><path fill="${c3}" d="M${x+18} 179h70v19h-70z"/><path fill="${c4}" d="M${x+18} 198h70v15q0 4-4 4h-62q-4 0-4-4z"/><rect x="${x}" y="157" width="45" height="45" rx="4" fill="${cb}"/><text x="${x+22}" y="191" font-size="32" font-weight="700" text-anchor="middle" fill="#fff" font-family="Open Sans">${l}</text></g>`;
    this.attachShadow({mode:'open'}).innerHTML=BASE+`<style>:host{height:45px;background:#0a0d10;padding-left:29px}.p{width:970px;height:45px;background:linear-gradient(90deg,#14191e,#121a20 50%,#15161c);border:1px solid #272b2f;border-bottom:0;border-radius:4px 4px 0 0;box-sizing:border-box}</style>
<svg width="0" height="0" style="position:absolute"><defs>
<linearGradient id="fL" x1="0" y1="0" x2="0" y2="1"><stop offset="0" stop-color="#6cc5f4"/><stop offset="1" stop-color="#2b83d6"/></linearGradient>
<linearGradient id="gr" x1="0" y1="0" x2="0" y2="1"><stop offset="0" stop-color="#c9d2d7"/><stop offset="1" stop-color="#7f868a"/></linearGradient>
<linearGradient id="rd" x1="0" y1="0" x2="0" y2="1"><stop offset="0" stop-color="#c8372c"/><stop offset="1" stop-color="#6d1d18"/></linearGradient>
<radialGradient id="rb" cx=".5" cy=".85" r=".9"><stop offset="0" stop-color="#7cc4f4"/><stop offset=".5" stop-color="#2a62ba"/><stop offset="1" stop-color="#7498d6"/></radialGradient>
<linearGradient id="ij" x1="0" y1="0" x2="1" y2="1"><stop offset="0" stop-color="#dc3c5c"/><stop offset=".4" stop-color="#b0509a"/><stop offset=".7" stop-color="#4a78d0"/><stop offset="1" stop-color="#4a6ac8"/></linearGradient>
<linearGradient id="sf" x1="0" y1="0" x2="0" y2="1"><stop offset="0" stop-color="#62b5ee"/><stop offset="1" stop-color="#2469c4"/></linearGradient>
<linearGradient id="sky" x1="0" y1="0" x2="0" y2="1"><stop offset="0" stop-color="#4a8bd0"/><stop offset="1" stop-color="#a9cdea"/></linearGradient>
</defs></svg><div class="p">`+row(245,694,43,[
      d(P,122,210,`<g ${N}><rect x="126" y="141" width="81" height="76" rx="4" fill="url(#fL)"/><path fill="#e4eef6" d="M170 141h33q4 0 4 4v68q0 4-4 4h-29q-3-14-3-27h-12q2-28 11-49z"/></g><path stroke="#183a62" stroke-width="3.400" d="M141 190q25 18 50 0M150 160v7M183 160v7"/>`,165),
      d(P,230,321,`<circle cx="276" cy="179" r="43" fill="url(#gr)" stroke="#e0e6ea" stroke-width="3"/><path fill="#42474c" ${N} d="M303 151q-23 2-34 17l-15 2-9 14 14-2 12 12-2 14 14-9 2-15q16-11 18-33zM253 188q-8 6-8 16 10 0 16-8z"/><circle cx="287" cy="168" r="5" fill="#a9b2b8" ${N}/>`),
      d(P,345,428,`<g transform="rotate(-7 386 180)"><g ${N}><rect x="350" y="139" width="74" height="82" rx="3" fill="#c9cccd"/><path fill="#2b2e30" d="M350 139h74v17h-74z"/><path fill="#e08a3c" d="M404 156h20v65h-20z"/></g><path stroke="#9a9d9f" stroke-width="2" d="M350 177h54M350 193h54M350 207h54M368 156v65M386 156v65"/><path stroke="#b8692a" stroke-width="2" d="M404 177h20M404 193h20M404 207h20"/></g>`),
      d(P,453,536,`<g transform="rotate(-8 494 178)"><rect x="460" y="138" width="70" height="81" fill="url(#sky)" stroke="#f2f2f2" stroke-width="5" stroke-dasharray="4 2.500"/><path fill="#7b5a34" ${N} d="M475 150q4 12 18 18l10 12q10-6 20 2-2 6-10 8l4 10-14-4q-10 4-18-8-6-4-8-12l-12-2q8-4 14-4-8-8-4-20z"/><path fill="#f0e4cc" ${N} d="M502 186l16 5-14 6z"/></g>`),
      d(P,564,648,`<g ${N} transform="rotate(-5 606 178)"><rect x="570" y="135" width="72" height="86" rx="2" fill="#f7f6ef"/><path fill="#f3cd48" d="M570 135h72v18h-72z"/></g><path stroke="#deddd6" stroke-width="2" d="M572 174l70-6M573 188l70-6M574 202l70-6"/>`),
      d(P,668,760,`<g ${N}><circle cx="713" cy="179" r="44" fill="#f6f6f4"/>${petals}</g>`),
      d(P,777,868,`<g ${N}><rect x="780" y="141" width="80" height="71" rx="9" fill="#6fba58"/><rect x="791" y="158" width="38" height="34" rx="6" fill="#f4f8f2"/><path fill="#f4f8f2" d="M832 171l17-12v30l-17-10z"/><circle cx="847" cy="196" r="21" fill="#f1f4f1"/></g><path stroke="#62b04e" stroke-width="6" stroke-linecap="round" d="M838 187q2 14 17 18"/>`),
      d(P,887,990,`<circle cx="933" cy="179" r="44" fill="#f7f7f7" ${N}/><g stroke-width="9.500" stroke-linecap="round"><path stroke="#5cbfe2" d="M926 155v18M910 172h16"/><path stroke="#4fae7c" d="M942 154v18M942 172h15"/><path stroke="#e0b040" d="M942 187h16M942 187v16"/><path stroke="#cc3558" d="M926 187v16M910 187h16"/></g><circle cx="968" cy="148" r="19" fill="#dc4a3c" ${N}/><circle cx="968" cy="148" r="3" fill="#fff" ${N}/>`,932),
      d(P,997,1099,`<rect x="999" y="138" width="89" height="81" rx="5" fill="url(#gr)" ${N}/><g stroke="#33373a"><circle cx="1042" cy="179" r="33" stroke-width="7" stroke-dasharray="4 3"/><circle cx="1042" cy="179" r="28" stroke-width="6" fill="#9ba1a4"/><circle cx="1042" cy="179" r="7" stroke-width="5"/><path stroke-width="5" d="M1042 172v-20M1036 183l-18 12M1048 183l18 12"/></g><circle cx="1078" cy="148" r="19" fill="#dc4a3c" ${N}/><text x="1078" y="157" font-size="24" fill="#fff" text-anchor="middle" font-family="Inter">1</text>`),
      d(P,1105,1200,`<g ${N}><path fill="#b79f78" d="M1120 140l74-2 1 50-60 6z"/><g transform="rotate(-6 1150 180)"><rect x="1109" y="148" width="78" height="64" fill="#f0efe8"/><path fill="#3f7cc0" d="M1114 153h68v26h-68z"/><path fill="#dfe9f0" d="M1114 166q20 0 34 8t34 2v10h-68z"/><path fill="#2f5f96" d="M1114 172q20 2 34 10l34 4v4l-68-2z"/><path fill="#b8a586" d="M1114 188h68v18h-68z"/></g></g><circle cx="1180" cy="194" r="16" fill="#8d9496" stroke="#5f6568" stroke-width="6"/>`),
      d(P,1209,1314,`<circle cx="1262" cy="179" r="50" fill="url(#rb)" ${N}/><ellipse cx="1262" cy="152" rx="36" ry="21" fill="#fff" opacity=".3" ${N}/><text x="1263" y="199" font-size="56" text-anchor="middle" fill="#fff" font-family="Liberation Serif">R</text>`),
      d(P,1325,1418,`<circle cx="1371" cy="179" r="42" fill="#6db58a" stroke="#a8d8b4" stroke-width="4"/><g stroke="#eef6ee" stroke-width="2.800"><ellipse cx="1371" cy="179" rx="28" ry="10" transform="rotate(15 1371 179)"/><ellipse cx="1371" cy="179" rx="28" ry="10" transform="rotate(75 1371 179)"/><ellipse cx="1371" cy="179" rx="28" ry="10" transform="rotate(135 1371 179)"/></g><circle cx="1371" cy="179" r="4" fill="#fff" ${N}/>`,1371),
      d(P,1441,1520,`<g ${N}><path fill="url(#ij)" d="M1443 143l74-2 1 73-74 2z"/><path fill="#e9963a" d="M1443 178l16 20-14 18z"/><rect x="1454" y="152" width="53" height="53" fill="#0c0c10"/><text x="1458" y="182" font-size="27" font-weight="700" fill="#fff" font-family="Liberation Mono">IJ</text><path fill="#eee" d="M1458 195h21v4h-21z"/></g>`),
      d(Q,3,94,`<rect x="5" y="140" width="86" height="75" rx="5" fill="#1c1e20" stroke="#5d6366" stroke-width="3.400"/><rect x="10" y="146" width="76" height="64" fill="#202123" ${N}/><text x="14" y="166" font-size="17" font-weight="700" fill="#e8e8e8" font-family="Liberation Mono">&gt;_</text>`),
      d(Q,111,202,office(112,'#5fb583','#3f9463','#35774c','#27553a','#2f7d4c','X'),155),
      d(Q,220,312,office(222,'#6ba2da','#4178c8','#2f60ae','#264888','#2f5cac','W'),264),
      d(Q,330,419,`<g ${N}><circle cx="378" cy="178" r="39" fill="#cf6a49"/><path fill="#e39673" d="M378 139a39 39 0 0 1 39 39h-39z"/><path fill="#b85a3c" d="M341 190h75a39 39 0 0 1-75 0z"/><rect x="331" y="157" width="45" height="45" rx="4" fill="#b8472e"/><text x="353" y="191" font-size="32" font-weight="700" text-anchor="middle" fill="#fff" font-family="Open Sans">P</text></g>`),
      d(Q,434,533,`<rect x="436" y="129" width="95" height="92" fill="url(#rd)" ${N}/><path stroke="#f0dcd8" stroke-width="4" stroke-linejoin="round" d="M481 150q-6 3-1 17 8 20 27 24 8 0 7-4-6-7-35 0-24 8-24 16 6 5 17-16 14-29 9-37z"/>`,483),
      d(Q,545,641,`<rect x="548" y="131" width="90" height="90" rx="11" fill="#10242c" stroke="#83c4cf" stroke-width="4.500"/><text x="592" y="194" font-size="50" font-weight="600" text-anchor="middle" fill="#d8eef0" font-family="Open Sans">Lr</text>`),
      d(Q,652,752,`<rect x="656" y="131" width="92" height="90" fill="#2c1c11" stroke="#c07b34" stroke-width="4.500"/><text x="702" y="195" font-size="50" font-weight="600" text-anchor="middle" fill="#e8923f" font-family="Open Sans">Ai</text>`,700),
      d(Q,766,859,`<circle cx="812" cy="179" r="44" fill="#76bb6d" ${N}/><g stroke="#121a16" stroke-linecap="round"><path stroke-width="8" d="M785 163q29-8 57 6"/><path stroke-width="7" d="M788 179q26-7 49 6"/><path stroke-width="6" d="M790 194q23-5 42 6"/></g>`,809),
      d(Q,873,969,`<g ${N}><circle cx="920" cy="179" r="46" fill="#c94f42"/><path fill="#4f9a5c" d="M880 156a46 46 0 0 0 33 68l21-37-31 0z"/><path fill="#f0c34c" d="M964 165a46 46 0 0 1-49 60l24-37-1-23z"/><circle cx="920" cy="179" r="23" fill="#f2f2f2"/><circle cx="920" cy="179" r="18" fill="#4f7cc4"/></g>`,919),
      d(Q,982,1078,`<g ${N} fill="#f1e79a"><path d="M983 149l42-14 12 38-43 14z"/><path fill="#f5ec9f" d="M1020 151l54 0 1 42-48 2z"/><path d="M1008 190l52-4 2 31-51 2z"/></g><g stroke="#6d6a4a" stroke-width="2"><path d="M993 157q5-6 9 0t9-4 9 0M997 168l24-7M1022 203h20"/><path stroke="#c85a42" stroke-width="3" d="M1040 168q5-4 8 0t8 0 10-1"/></g>`,1028),
      d(Q,1091,1185,`<circle cx="1138" cy="179" r="43" fill="url(#sf)" stroke="#cdd5dc" stroke-width="4"/><circle cx="1138" cy="179" r="35" stroke="#bcdcf2" stroke-width="4" stroke-dasharray="1.500 4"/><path fill="#d8493c" ${N} d="M1166 151l-22 34-12-12z"/><path fill="#f3f3f3" ${N} d="M1110 207l22-34 12 12z"/>`,1137),
      ic(Q,1216,120,1219,250,'<path stroke="#4a4e52" d="M1217.500 132v102"/>'),
      d(Q,1247,1346,`<rect x="1249" y="150" width="95" height="57" fill="#23262f" ${N}/><path stroke="#454a58" stroke-width="2" d="M1249 154h95M1262 166h22M1262 174h50M1262 183h40M1290 158h18"/><circle cx="1327" cy="208" r="17" fill="#8ccba8" stroke="#5aa882" stroke-width="2"/><path stroke="#c8ead4" stroke-width="1.500" d="M1314 202h26M1314 212h26M1322 194v28M1332 194v28"/>`),
      d(Q,1368,1444,`<g ${N}><path fill="#5f6468" d="M1373 146h66l-7 70q-1 6-7 7h-38q-6-1-7-7z"/><path fill="#8d9397" opacity=".6" d="M1385 150h12l2 68h-8zM1414 150h9l-4 66h-7z"/><ellipse cx="1406" cy="147" rx="34" ry="9" fill="#aab0b3"/><path fill="#eceeee" d="M1378 146l6-11 12 3 6-7 13 6 9-5 10 13-14 5-16-4-12 4z"/><path fill="#394046" d="M1388 140l5 4-6 2zM1412 139l4 5-8 1z"/></g>`)
    ])+'</div>';
  }
}
customElements.define('app-dock',AppDock);

class MacBook extends HTMLElement{
  connectedCallback(){
    this.attachShadow({mode:'open'}).innerHTML=BASE+`<style>
:host{display:flex;flex-direction:column;align-items:center;width:1452px;padding:36px 0 0 8px;height:872px}
.lid{width:1120px;height:761px;box-sizing:border-box;border:4px solid #808187;border-bottom:0;border-radius:44px 44px 8px 8px;background:#11100f;display:flex;flex-direction:column;box-shadow:inset 0 0 0 1.500px #000,inset 0 0 0 2.500px #2a2c2e;overflow:hidden}
.screen{width:1031px;height:644px;margin:54px 0 0 41px;overflow:hidden;flex:none}
.chin{margin:28.500px 1.500px 0;height:31px;background:linear-gradient(90deg,#1d1815,#1d1b18 30%,#222220 60%,#262626);display:flex;justify-content:center;align-items:center;flex:none}
.chin fit-text{font-family:"Open Sans","Noto Sans",sans-serif;font-size:17.500px;color:#cfcfcf;width:69px}
.base{width:1370px;height:30px;display:block;margin-top:-1px}
</style>
<div class="lid"><div class="screen"><slot></slot></div><div class="chin"><fit-text w="68">MacBook</fit-text></div></div>
<svg class="base" viewBox="45 796 1370 30"><defs>
<linearGradient id="b" x1="0" y1="0" x2="0" y2="1"><stop offset="0" stop-color="#77767b"/><stop offset=".45" stop-color="#636267"/><stop offset=".8" stop-color="#3e3d41"/><stop offset="1" stop-color="#2b2a2c"/></linearGradient>
<linearGradient id="t" x1="0" x2="1" y1="0" y2="0"><stop offset="0" stop-color="#4a4a4c"/><stop offset=".008" stop-color="#77777a"/><stop offset=".022" stop-color="#c2c2c4"/><stop offset=".4" stop-color="#d0ced4"/><stop offset=".6" stop-color="#c9c8cd"/><stop offset=".978" stop-color="#b9b9bc"/><stop offset=".992" stop-color="#707074"/><stop offset="1" stop-color="#444"/></linearGradient>
<linearGradient id="n" x1="0" x2="1" y1="0" y2="0"><stop offset="0" stop-color="#8a898e"/><stop offset=".06" stop-color="#bdbcc1"/><stop offset=".5" stop-color="#c9c8cd"/><stop offset=".94" stop-color="#bdbcc1"/><stop offset="1" stop-color="#8a898e"/></linearGradient>
</defs>
<path fill="url(#b)" d="M45 802.500h1370v2q-42 15-125 18-40 2-90 2.200H260q-60-.2-95-2.200-80-3-120-18z"/>
<path stroke="#a4a8a4" stroke-width=".8" d="M240 824.500h980"/>
<path fill="url(#t)" d="M45 797h1370v7H45z"/><path stroke="#eceaf0" stroke-width=".8" d="M70 797.300h1320"/><path stroke="#4b4a4e" stroke-width=".7" d="M50 804h1360"/>
<path fill="url(#n)" d="M600 797h260v6q-22 3-60 3.300H660q-38-.3-60-3.300z"/><path stroke="#4c4b4f" stroke-width=".8" d="M600 797v7M860 797v7"/>
<path stroke="#2d2c2e" stroke-width=".8" d="M170 796.500h1120"/>
<g fill="#29282a"><ellipse cx="179" cy="817" rx="4" ry="1.200"/><ellipse cx="560" cy="817" rx="4" ry="1.200"/><ellipse cx="898" cy="817" rx="4" ry="1.200"/><ellipse cx="1279" cy="817" rx="4" ry="1.200"/></g>
</svg>`;
  }
}
customElements.define('mac-book',MacBook);
</script>
</body>
</html>
